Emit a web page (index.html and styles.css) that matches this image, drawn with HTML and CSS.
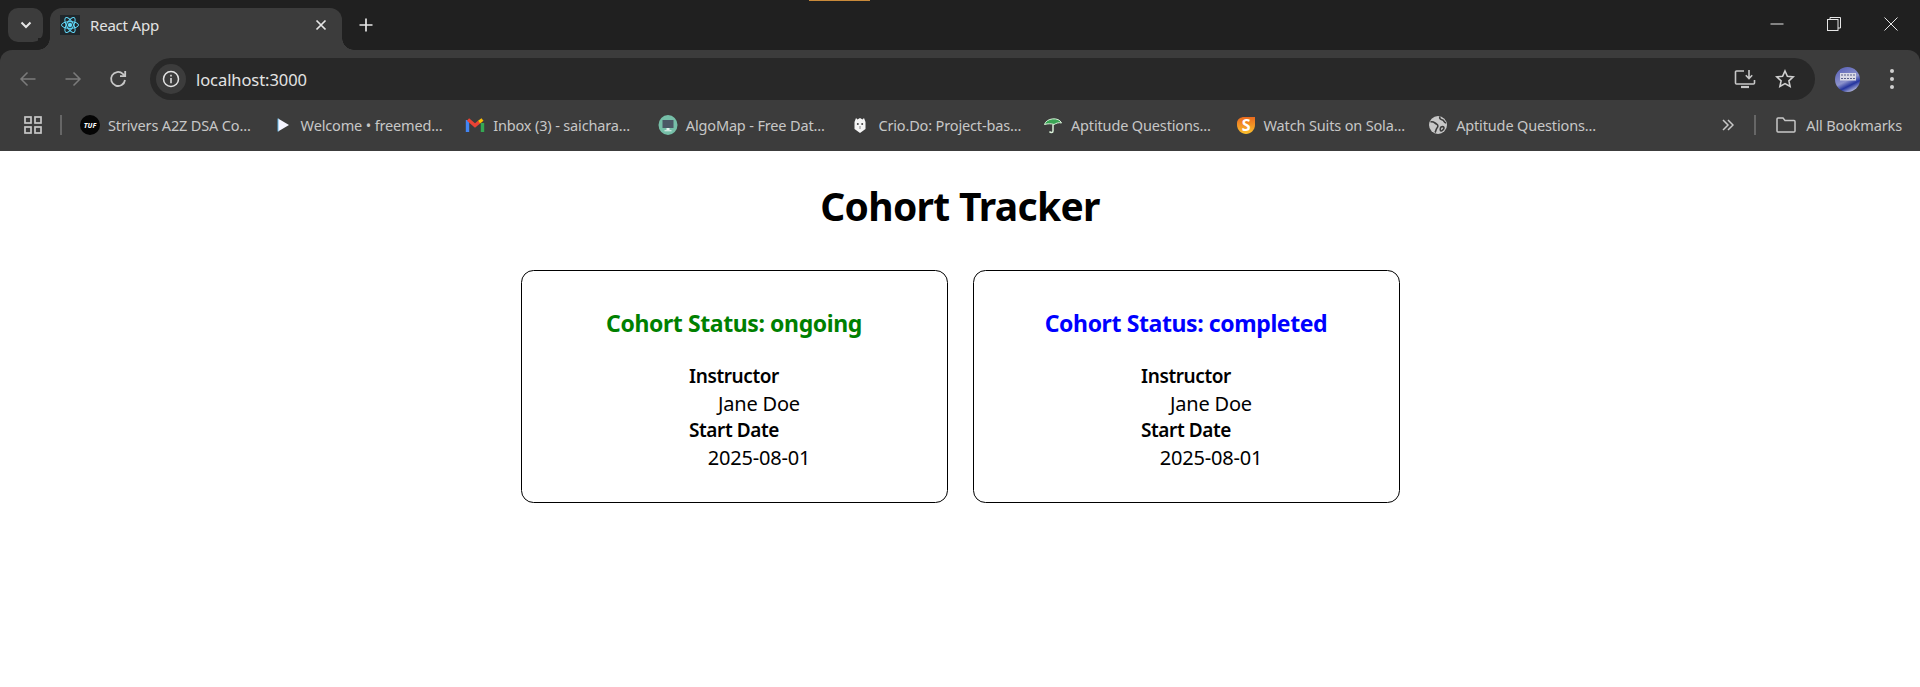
FILE: index.html
```html
<!DOCTYPE html>
<html lang="en">
<head>
    <meta charset="UTF-8">
    <meta name="viewport" content="width=device-width, initial-scale=1.0">
    <title>React App</title>
    <link rel="stylesheet" href="styles.css">
</head>
<body>
    <!-- Browser Chrome -->
    <header class="browser">
        <div class="tabstrip">
            <span class="capture-mark"></span>
            <button class="tab-search">
                <svg width="14" height="14" viewBox="0 0 14 14"><path d="M2.500 4.500 7 9l4.500-4.500" fill="none" stroke="#e6e6e6" stroke-width="2"/></svg>
            </button>
            <div class="tab">
                <span class="favicon">
                    <svg width="20" height="20" viewBox="0 0 20 20" fill="none" stroke="#61dafb" stroke-width="1">
                        <ellipse cx="10" cy="10" rx="8.500" ry="3.400"/>
                        <ellipse cx="10" cy="10" rx="8.500" ry="3.400" transform="rotate(60 10 10)"/>
                        <ellipse cx="10" cy="10" rx="8.500" ry="3.400" transform="rotate(120 10 10)"/>
                        <circle cx="10" cy="10" r="1.800" fill="#61dafb"/>
                    </svg>
                </span>
                <span class="tab-title">React App</span>
                <svg class="tab-close" width="12" height="12" viewBox="0 0 12 12"><path d="M1.500 1.500l9 9M10.500 1.500l-9 9" stroke="#e6e6e6" stroke-width="1.700"/></svg>
            </div>
            <svg class="new-tab" width="16" height="16" viewBox="0 0 16 16"><path d="M8 1.500v13M1.500 8h13" stroke="#e6e6e6" stroke-width="1.700"/></svg>
            <div class="window-controls">
                <svg width="14" height="14" viewBox="0 0 14 14"><path d="M0.500 7h13" stroke="#e6e6e6"/></svg>
                <svg width="14" height="14" viewBox="0 0 14 14" fill="none" stroke="#e6e6e6"><rect x="0.500" y="2.500" width="10.500" height="11"/><path d="M3 2.500V0.500h10.500V11H11"/></svg>
                <svg width="14" height="14" viewBox="0 0 14 14"><path d="M0.500 0.500l13 13M13.500 0.500l-13 13" stroke="#e6e6e6"/></svg>
            </div>
        </div>

        <div class="toolbar">
            <svg class="nav-icon" width="18" height="18" viewBox="0 0 18 18" fill="none" stroke="#7b7b7b" stroke-width="1.500"><path d="M16.500 9H2M8.500 2.500 2 9l6.500 6.500"/></svg>
            <svg class="nav-icon" width="18" height="18" viewBox="0 0 18 18" fill="none" stroke="#7b7b7b" stroke-width="1.500"><path d="M1.500 9H16M9.500 2.500 16 9l-6.500 6.500"/></svg>
            <svg class="nav-icon reload" width="18" height="18" viewBox="0 0 18 18" fill="none" stroke="#c7c7c7" stroke-width="1.800"><path d="M16 10A7 7 0 1 1 13.800 3.800L16 6"/><path d="M16.200 1v5.200H11"/></svg>
            <div class="omnibox">
                <span class="site-info">
                    <svg width="18" height="18" viewBox="0 0 18 18" fill="none" stroke="#e3e3e3" stroke-width="1.500"><circle cx="9" cy="9" r="7.500"/><path d="M9 8v5.200M9 4.800v1.800"/></svg>
                </span>
                <span class="url">localhost:3000</span>
                <svg class="omni-icon" width="22" height="20" viewBox="0 0 22 20" fill="none" stroke="#c7c7c7" stroke-width="1.600"><path d="M10 2H2.500a1 1 0 0 0-1 1v11a1 1 0 0 0 1 1h17a1 1 0 0 0 1-1v-3"/><path d="M15 1v8M11.800 6.200 15 9.500l3.200-3.300"/><path d="M7 18h8" stroke-width="2.200"/></svg>
                <svg class="omni-icon" width="20" height="20" viewBox="0 0 20 20" fill="none" stroke="#d0d0d0" stroke-width="1.600"><path d="m10 2 2.400 5.300 5.800.6-4.300 3.900 1.200 5.700L10 14.600l-5.100 2.900 1.200-5.700-4.300-3.900 5.800-.6z"/></svg>
            </div>
            <svg class="avatar" width="25" height="25" viewBox="0 0 25 25">
                <defs>
                    <linearGradient id="avatar-fill" x1="0.200" y1="0" x2="0.700" y2="1">
                        <stop offset="0" stop-color="#5a62b8"/>
                        <stop offset="0.550" stop-color="#8d93cc"/>
                        <stop offset="0.750" stop-color="#24349e"/>
                        <stop offset="1" stop-color="#c4c6e2"/>
                    </linearGradient>
                </defs>
                <circle cx="12.500" cy="12.500" r="12.500" fill="url(#avatar-fill)"/>
                <rect x="5" y="6" width="16" height="7.500" fill="#d9d9e6"/>
                <path d="M6 8h14M6 11.500h14" stroke="#5a5f88" stroke-width="1.200" stroke-dasharray="2 1"/>
            </svg>
            <svg class="menu-icon" width="6" height="20" viewBox="0 0 6 20" fill="#d0d0d0"><circle cx="3" cy="2" r="2"/><circle cx="3" cy="10" r="2"/><circle cx="3" cy="18" r="2"/></svg>
        </div>

        <div class="bookmarks">
            <svg class="apps" width="18" height="18" viewBox="0 0 18 18" fill="none" stroke="#c7c7c7" stroke-width="1.700"><rect x="1" y="1" width="6" height="6"/><rect x="11" y="1" width="6" height="6"/><rect x="1" y="11" width="6" height="6"/><rect x="11" y="11" width="6" height="6"/></svg>
            <span class="bar-divider"></span>
            <a class="bookmark">
                <svg width="20" height="20" viewBox="0 0 20 20"><circle cx="10" cy="10" r="10" fill="#050505"/><text x="10" y="12.500" class="fav-tuf">TUF</text></svg>
                <span>Strivers A2Z DSA Co...</span>
            </a>
            <a class="bookmark">
                <svg width="20" height="20" viewBox="0 0 20 20"><path d="M5 3.500l11 6.500-11 6.500z" fill="#f4f4ff"/><path d="M5 3.500v13" stroke="#5fb6e8"/></svg>
                <span>Welcome • freemed...</span>
            </a>
            <a class="bookmark">
                <svg width="20" height="20" viewBox="0 0 20 20" fill="none" stroke-width="3.400"><path d="M2.500 17V5" stroke="#4285f4"/><path d="M17.500 17V8" stroke="#34a853"/><path d="M3 4.500l7 6 4-3.400" stroke="#ea4335"/><path d="M14 7.100l3.500-2.600" stroke="#fbbc04"/></svg>
                <span>Inbox (3) - saichara...</span>
            </a>
            <a class="bookmark">
                <svg width="20" height="20" viewBox="0 0 20 20"><ellipse cx="10" cy="10" rx="9.500" ry="10" fill="#76bfa8"/><rect x="4.500" y="5" width="11" height="8" fill="#4b5866"/><path d="M8.500 13h3v2h-3zM6.500 15.200h7v1h-7z" fill="#e8f2f0"/></svg>
                <span>AlgoMap - Free Dat...</span>
            </a>
            <a class="bookmark">
                <svg width="20" height="20" viewBox="0 0 20 20"><path d="M6 3l1.500 1.500L10 3l2.500 1.500L14 3l1.500 4v7L10 18l-5.500-4V7z" fill="#f5f5f5"/><circle cx="7.800" cy="9" r="1" fill="#444"/><circle cx="12.200" cy="9" r="1" fill="#444"/><path d="M10 11v3" stroke="#888"/></svg>
                <span>Crio.Do: Project-bas...</span>
            </a>
            <a class="bookmark">
                <svg width="20" height="20" viewBox="0 0 20 20"><path d="M1.500 9.500C3 3 16 1.500 18.500 8c-3-.8-5 .2-7.500 1.500C8 8.500 5 8.500 1.500 9.500z" fill="#3aa655" stroke="#d8efd8"/><path d="M10 9.500v6.500c0 2-2.500 2-3.500.5" fill="none" stroke="#d8efd8" stroke-width="1.500"/></svg>
                <span>Aptitude Questions...</span>
            </a>
            <a class="bookmark">
                <svg width="20" height="20" viewBox="0 0 20 20">
                    <defs>
                        <linearGradient id="sola-fill" x1="0" y1="0" x2="0" y2="1">
                            <stop offset="0" stop-color="#ea6a1e"/>
                            <stop offset="1" stop-color="#fbc02d"/>
                        </linearGradient>
                    </defs>
                    <path d="M1 8C1 4 5 2 8 2h11v8c0 5-4.500 9-9 9S1 15 1 10z" fill="url(#sola-fill)"/>
                    <text x="10" y="15.500" class="fav-letter">S</text>
                </svg>
                <span>Watch Suits on Sola...</span>
            </a>
            <a class="bookmark">
                <svg width="20" height="20" viewBox="0 0 20 20"><circle cx="10" cy="10" r="9" fill="#c7c7c7"/><path d="M2.500 7c3-1 4 1 6 2s1.500 3 .5 4-1 3-2 4.500M12 1.500c-1 2 .5 3 2.500 3.500s1 2.500 3.500 3M13 12c2-1 3 0 3 1s-2 3-3 3-1-3 0-4z" fill="none" stroke="#3c3c3c" stroke-width="1.600"/></svg>
                <span>Aptitude Questions...</span>
            </a>
            <div class="bookmarks-end">
                <svg width="12" height="12" viewBox="0 0 12 12" fill="none" stroke="#c7c7c7" stroke-width="1.500"><path d="M1 1l5 5-5 5M6 1l5 5-5 5"/></svg>
                <span class="bar-divider"></span>
                <a class="bookmark all">
                    <svg width="20" height="18" viewBox="0 0 20 18" fill="none" stroke="#c7c7c7" stroke-width="1.500"><path d="M1 3a1 1 0 0 1 1-1h5l2 2.500h9a1 1 0 0 1 1 1V15a1 1 0 0 1-1 1H2a1 1 0 0 1-1-1z"/></svg>
                    <span>All Bookmarks</span>
                </a>
            </div>
        </div>
    </header>

    <!-- Cohort Tracker Page -->
    <main class="app">
        <h1>Cohort Tracker</h1>
        <div class="cohort-list">
            <section class="cohort-card">
                <h3 class="status ongoing">Cohort Status: ongoing</h3>
                <dl>
                    <dt>Instructor</dt>
                    <dd>Jane Doe</dd>
                    <dt>Start Date</dt>
                    <dd>2025-08-01</dd>
                </dl>
            </section>
            <section class="cohort-card">
                <h3 class="status completed">Cohort Status: completed</h3>
                <dl>
                    <dt>Instructor</dt>
                    <dd>Jane Doe</dd>
                    <dt>Start Date</dt>
                    <dd>2025-08-01</dd>
                </dl>
            </section>
        </div>
    </main>
</body>
</html>
```

FILE: styles.css
```css
html, body {
    margin: 0;
    height: 100%;
    overflow: hidden;
    background: #fff;
}
body {
    font-family: "Noto Sans", "Open Sans", sans-serif;
    color: #000;
}

/* browser chrome */
.browser {
    background: #202020;
    color: #c7c7c7;
}
.browser svg {
    flex: none;
    display: block;
}
.tabstrip {
    position: relative;
    height: 50px;
    display: flex;
    align-items: flex-start;
    padding: 8px 0 0 8px;
    box-sizing: border-box;
}
.capture-mark {
    position: absolute;
    left: 809px;
    top: 0;
    width: 61px;
    height: 1px;
    background: #c98a3a;
}
.tab-search {
    width: 35px;
    height: 34px;
    border: none;
    border-radius: 10px;
    background: #3c3c3c;
    padding: 0;
    display: flex;
    align-items: center;
    justify-content: center;
}
.tab {
    position: relative;
    width: 292px;
    height: 42px;
    margin-left: 7px;
    padding: 0 15px 8px 10px;
    box-sizing: border-box;
    background: #3c3c3c;
    border-radius: 12px 12px 0 0;
    display: flex;
    align-items: center;
    color: #e3e3e3;
    font-size: 15px;
}
.tab::before, .tab::after {
    content: "";
    position: absolute;
    bottom: 0;
    width: 12px;
    height: 12px;
}
.tab::before {
    left: -12px;
    background: radial-gradient(circle at 0 0, #202020 11.500px, #3c3c3c 12px);
}
.tab::after {
    right: -12px;
    background: radial-gradient(circle at 100% 0, #202020 11.500px, #3c3c3c 12px);
}
.favicon {
    width: 20px;
    height: 20px;
    background: #20272b;
    margin-right: 10px;
    flex: none;
}
.tab-title {
    flex: 1;
    letter-spacing: -0.2px;
}
.new-tab {
    margin: 9px 0 0 16px;
}
.window-controls {
    margin-left: auto;
    display: flex;
    gap: 43px;
    padding: 9px 22px 0 0;
}

.toolbar {
    height: 54px;
    background: #3c3c3c;
    border-radius: 12px 12px 0 0;
    display: flex;
    align-items: center;
    padding: 8px 25px 4px 18.500px;
    box-sizing: border-box;
}
.nav-icon {
    margin-right: 27px;
}
.nav-icon.reload {
    margin-right: 23.500px;
}
.omnibox {
    flex: 1;
    height: 42px;
    background: #282828;
    border-radius: 21px;
    display: flex;
    align-items: center;
    padding: 0 20px 0 6px;
    font-size: 16.500px;
    color: #e3e3e3;
}
.site-info {
    width: 30px;
    height: 30px;
    border-radius: 50%;
    background: #3c3c3c;
    display: flex;
    align-items: center;
    justify-content: center;
    margin-right: 10px;
}
.url {
    flex: 1;
    letter-spacing: -0.07px;
}
.omni-icon {
    margin-left: 19px;
}
.browser .avatar {
    margin: 0 29px 0 20px;
}
.bookmarks {
    height: 47px;
    background: #3c3c3c;
    display: flex;
    align-items: center;
    padding: 0 0 6px 24px;
    box-sizing: border-box;
    font-size: 14.500px;
}
.apps {
    margin-right: 18px;
}
.bar-divider {
    width: 2px;
    height: 20px;
    background: #666;
    flex: none;
}
.bar-divider + .bookmark {
    margin-left: 18px;
}
.bookmark {
    width: 192.600px;
    flex: none;
    display: flex;
    align-items: center;
    gap: 8px;
    white-space: nowrap;
    letter-spacing: -0.15px;
}
.bookmarks-end {
    margin-left: auto;
    display: flex;
    align-items: center;
    gap: 20px;
    padding-right: 18px;
}
.bookmarks-end .bar-divider + .bookmark {
    margin-left: 0;
}
.bookmark.all {
    width: auto;
    gap: 10px;
}
.fav-letter {
    font-size: 16px;
    font-weight: 700;
    fill: #fff;
    text-anchor: middle;
}
.fav-tuf {
    font-size: 7px;
    font-weight: 700;
    font-style: italic;
    fill: #fff;
    text-anchor: middle;
    letter-spacing: 0;
}

/* cohort page */
.app {
    text-align: center;
}
h1 {
    font-size: 39px;
    letter-spacing: -0.7px;
    line-height: 53px;
    margin: 28px 0 38px;
}
.cohort-list {
    display: flex;
    justify-content: center;
    gap: 25px;
}
.cohort-card {
    width: 427px;
    box-sizing: border-box;
    border: 1px solid #000;
    border-radius: 12.500px;
    padding: 12.500px;
}
.status {
    font-size: 23px;
    letter-spacing: -0.4px;
    line-height: 31px;
    margin: 24.400px 0 24.500px;
}
.ongoing {
    color: green;
}
.completed {
    color: blue;
}
dl {
    font-size: 20px;
    line-height: 27px;
    margin: 0 0 18px;
}
dt {
    font-size: 19px;
    letter-spacing: -0.4px;
    font-weight: 600;
}
dd {
    margin-left: 50px;
    letter-spacing: -0.2px;
}
```
